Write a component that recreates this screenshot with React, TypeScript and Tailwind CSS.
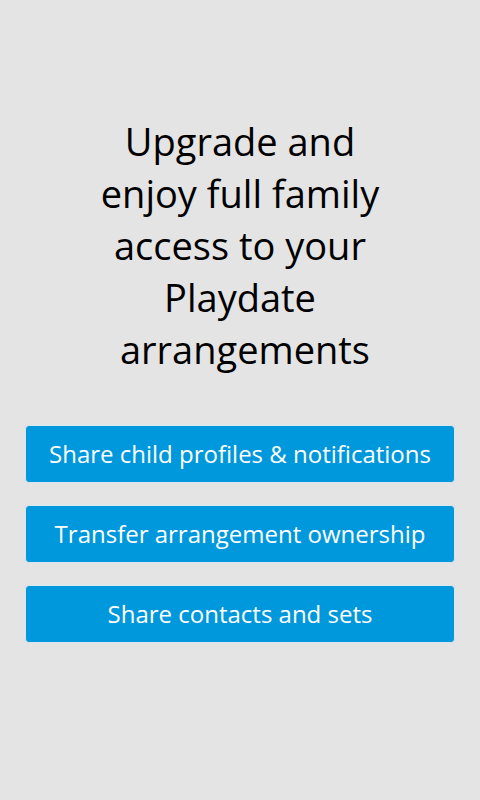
import React from 'react';

const features = [
  'Share child profiles & notifications',
  'Transfer arrangement ownership',
  'Share contacts and sets',
];

const App: React.FC = () => {
  return (
    <div className="w-[480px] h-[800px] bg-[#e4e4e4] flex flex-col items-center pt-[115px] font-['Open_Sans','Lato',sans-serif]">
      <h1 className="text-center text-black text-[38px] leading-[52px] font-normal">
        Upgrade and<br />
        enjoy full family<br />
        access to your<br />
        Playdate<br />
        {'\u00a0'}arrangements
      </h1>
      <div className="w-full px-[25px] mt-[50px] flex flex-col gap-[22px]">
        {features.map((f) => (
          <button
            key={f}
            className="h-[58px] w-full rounded-[4px] bg-[#0098dc] border border-[#d9e6ee] text-white text-[24px] text-center"
          >
            {f}
          </button>
        ))}
      </div>
    </div>
  );
};

export default App;
